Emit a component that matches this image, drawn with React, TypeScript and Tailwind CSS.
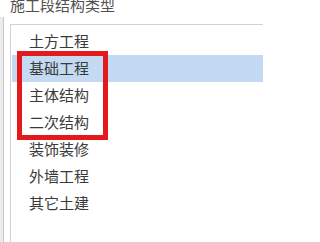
import React from 'react';

const items = ['土方工程', '基础工程', '主体结构', '二次结构', '装饰装修', '外墙工程', '其它土建'];

const App: React.FC = () => {
  const selected = 1;
  return (
    <div
      className="relative w-[263px] h-[242px] overflow-hidden bg-white"
      style={{ fontFamily: '"Noto Sans CJK SC", "Microsoft YaHei", sans-serif' }}
    >
      {/* header label */}
      <div className="absolute left-[10px] top-[-5px] text-[15px] leading-[20px] text-[#505050]">施工段结构类型</div>

      {/* left edge of neighbouring panel */}
      <div className="absolute left-0 top-[17px] bottom-0 flex">
        <div className="w-[3px] bg-[#ececec]" />
        <div className="w-px bg-[#c9c9c9]" />
      </div>

      {/* list box */}
      <div className="absolute left-[10px] top-[24px] right-[-10px] bottom-[-10px] border-t border-l border-[#d2d2d2] pt-[3px] pl-px">
        {items.map((item, i) => (
          <div
            key={item}
            className={`h-[27px] flex items-center pl-[17px] text-[15px] text-[#3a3a3a] ${i === selected ? 'bg-[#c4daf2]' : ''}`}
          >
            {item}
          </div>
        ))}
      </div>

      {/* red annotation box */}
      <div className="absolute left-[17px] top-[51px] w-[91px] h-[89px] border-[5px] border-[#e3191b]" />
    </div>
  );
};

export default App;
